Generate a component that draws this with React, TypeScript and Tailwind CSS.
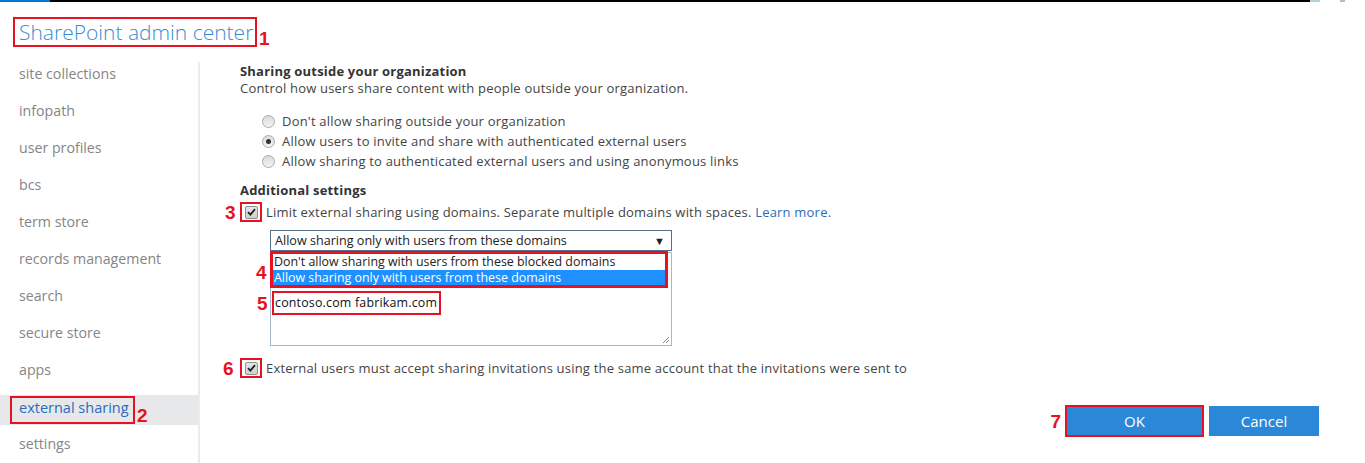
import React from "react";

const navItems = [
  "site collections",
  "infopath",
  "user profiles",
  "bcs",
  "term store",
  "records management",
  "search",
  "secure store",
  "apps",
  "external sharing",
  "settings",
];

function Num({ n, className = "" }: { n: string; className?: string }) {
  return (
    <span
      className={`font-bold text-[19px] leading-none text-[#e81123] tracking-normal ${className}`}
      style={{ fontFamily: '"Liberation Sans", Arial, sans-serif' }}
    >
      {n}
    </span>
  );
}

function Radio({ checked }: { checked?: boolean }) {
  return (
    <span className="w-[13px] h-[13px] rounded-full border border-[#a9a9a9] bg-gradient-to-b from-[#dcdcdc] to-[#f4f4f4] flex items-center justify-center shrink-0">
      {checked && <span className="w-[5px] h-[5px] rounded-full bg-[#333]" />}
    </span>
  );
}

function Check() {
  return (
    <span className="w-[13px] h-[13px] border border-[#8f8f8f] bg-gradient-to-b from-[#e6e6e6] to-[#cfcfcf] rounded-[2px] flex items-center justify-center shrink-0">
      <svg width="9" height="8" viewBox="0 0 9 8">
        <path d="M1 4.2 L3.4 6.6 L8 1.2" fill="none" stroke="#222" strokeWidth="1.8" />
      </svg>
    </span>
  );
}

export default function App() {
  return (
    <div
      className="w-[1365px] h-[463px] bg-white overflow-hidden text-[#333]"
      style={{ fontFamily: '"Open Sans", "Noto Sans", sans-serif' }}
    >
      <div className="flex h-[2px]">
        <div className="w-[50px] bg-[#0078d7]" />
        <div className="w-[1260px] bg-black" />
        <div className="w-[10px] bg-[#b5cfdc]" />
        <div className="flex-1" />
        <div className="w-[5px] bg-[#bbb]" />
        <div className="w-[20px]" />
      </div>
      <div className="h-[60px] pl-[13px] pt-[15px] flex items-start">
        <div className="border-2 border-[#e81123] h-[30px] w-[244px] pl-[4px] flex items-center">
          <span className="text-[21px] font-light text-[#3c8ad6] whitespace-nowrap leading-none">
            SharePoint admin center
          </span>
        </div>
        <Num n="1" className="mt-[12px] ml-[2px]" />
      </div>
      <div className="flex h-[401px]">
        <nav className="w-[200px] border-r-2 border-[#ebebeb] flex flex-col gap-[7px] shrink-0">
          {navItems.map((item) =>
            item === "external sharing" ? (
              <div key={item} className="h-[30px] bg-[#e7e8e9] flex items-center pl-[10px]">
                <div className="border-2 border-[#e81123] h-[28px] w-[125px] flex items-center pl-[7px] pb-[4px]">
                  <span className="text-[14.5px] text-[#2b6bbd]">{item}</span>
                </div>
                <Num n="2" className="mt-[10px] ml-[2px]" />
              </div>
            ) : (
              <div key={item} className="h-[30px] flex items-center pl-[19px] pb-[6px] text-[14.2px] text-[#858585]">
                {item}
              </div>
            )
          )}
        </nav>
        <main className="flex-1 pl-[40px] text-[13px] tracking-[0.2px] text-[#444] leading-[18px]">
          <div className="font-bold text-[#333] leading-[18px]">Sharing outside your organization</div>
          <div className="mt-[-1px]">Control how users share content with people outside your organization.</div>
          <div className="mt-[15px] pl-[22px] flex flex-col gap-[2px]">
            <label className="flex items-center gap-[7px] h-[18px]">
              <Radio />
              <span>Don't allow sharing outside your organization</span>
            </label>
            <label className="flex items-center gap-[7px] h-[18px]">
              <Radio checked />
              <span>Allow users to invite and share with authenticated external users</span>
            </label>
            <label className="flex items-center gap-[7px] h-[18px]">
              <Radio />
              <span>Allow sharing to authenticated external users and using anonymous links</span>
            </label>
          </div>
          <div className="mt-[11px] font-bold text-[#333]">Additional settings</div>
          <div className="mt-[2px] flex items-center h-[22px] ml-[-15px]">
            <Num n="3" className="w-[15px]" />
            <span className="border-2 border-[#e81123] w-[22px] h-[20px] flex items-center justify-center">
              <Check />
            </span>
            <span className="ml-[4px]">
              Limit external sharing using domains. Separate multiple domains with spaces.{" "}
              <span className="text-[#2b6bbd]">Learn more.</span>
            </span>
          </div>
          <div className="ml-[30px] mt-[7px] w-[402px] tracking-normal">
            <div className="h-[21px] border border-[#54708a] flex items-center justify-between pl-[4px] pr-[6px] text-[#222] text-[12.6px]">
              <span>Allow sharing only with users from these domains</span>
              <span className="text-[11px]">▼</span>
            </div>
            <div className="relative mt-[1px]">
              <div className="h-[94px] w-[402px] border border-[#a6b9cc] relative">
                <svg className="absolute right-[1px] bottom-[1px]" width="9" height="9" viewBox="0 0 9 9">
                  <path d="M8 2 L2 8 M8 5 L5 8" stroke="#888" strokeWidth="1" />
                </svg>
                <div className="absolute left-[1px] top-[38px] flex items-center">
                  <Num n="5" className="absolute left-[-15px] top-[3px]" />
                  <span className="border-2 border-[#e81123] h-[24px] pr-[2px] flex items-center pl-[1px] text-[#111] whitespace-nowrap text-[12.4px] tracking-[0.2px]">
                    contoso.com fabrikam.com
                  </span>
                </div>
              </div>
              <div className="absolute left-0 top-[-1px] w-[398px] h-[37px] border-[3px] border-[#e81123] bg-white text-[#222] text-[12.4px]">
                <Num n="4" className="absolute left-[-17px] top-[9px]" />
                <div className="h-[16px] flex items-center pl-[1px] leading-[16px]">
                  Don't allow sharing with users from these blocked domains
                </div>
                <div className="h-[15px] flex items-center pl-[1px] bg-[#1e90ff] text-white leading-[15px]">
                  Allow sharing only with users from these domains
                </div>
              </div>
            </div>
          </div>
          <div className="mt-[11px] flex items-center h-[22px] ml-[-17px]">
            <Num n="6" className="w-[17px]" />
            <span className="border-2 border-[#e81123] w-[22px] h-[20px] flex items-center justify-center">
              <Check />
            </span>
            <span className="ml-[4px]">
              External users must accept sharing invitations using the same account that the invitations were sent to
            </span>
          </div>
          <div className="mt-[26px] flex justify-end items-center pr-[46px] gap-[5px] tracking-normal">
            <Num n="7" className="mr-[-1px]" />
            <button className="w-[139px] h-[32px] bg-[#2b88d8] border-2 border-[#e81123] text-white text-[15px]">
              OK
            </button>
            <button className="w-[110px] h-[30px] bg-[#2b88d8] text-white text-[15px]">Cancel</button>
          </div>
        </main>
      </div>
    </div>
  );
}
